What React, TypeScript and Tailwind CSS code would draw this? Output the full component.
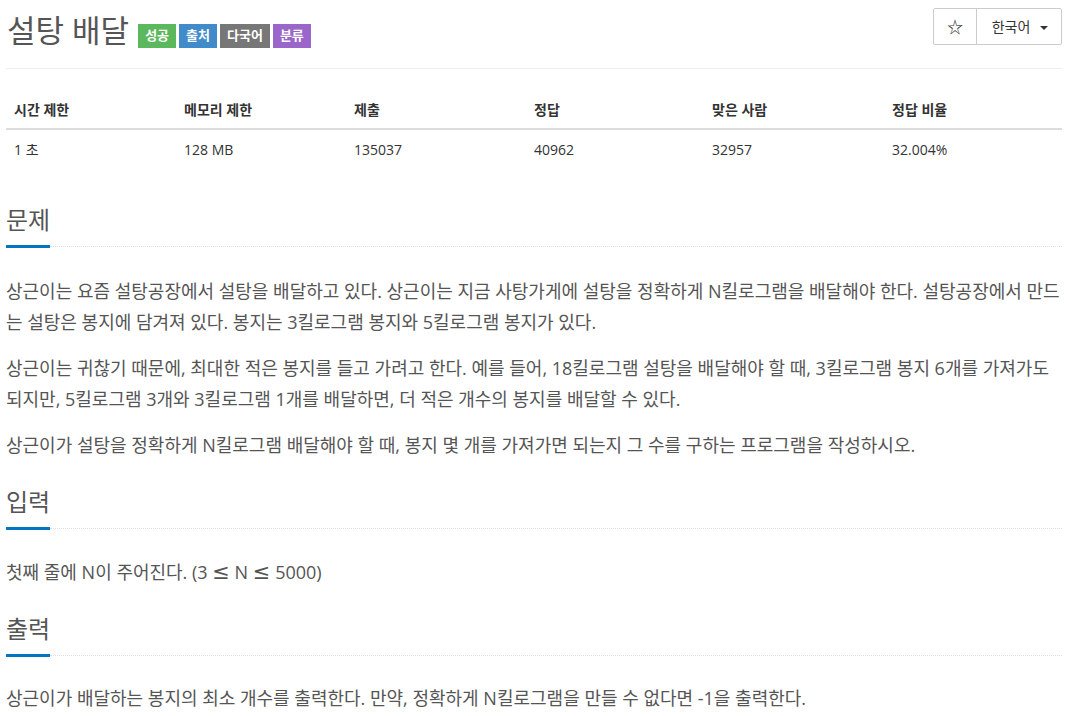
import React from "react";

const FONT = { fontFamily: '"Open Sans", "Noto Sans CJK KR", sans-serif' };
const MATH = { fontFamily: '"DejaVu Sans", sans-serif' };

const badges = [
  { label: "성공", cls: "bg-[#5cb85c]" },
  { label: "출처", cls: "bg-[#428bca]" },
  { label: "다국어", cls: "bg-[#777777]" },
  { label: "분류", cls: "bg-[#9b66c9]" },
];

const stats = [
  ["시간 제한", "1 초"],
  ["메모리 제한", "128 MB"],
  ["제출", "135037"],
  ["정답", "40962"],
  ["맞은 사람", "32957"],
  ["정답 비율", "32.004%"],
];

function SectionTitle({ title }: { title: string }) {
  return (
    <div className="flex items-end">
      <h2 className="border-b-[3px] border-[#0076c0] pb-2 text-[24px] font-normal leading-[34px] text-[#555]">
        {title}
      </h2>
      <div className="mb-[1px] flex-1 border-b border-dotted border-[#dddddd]" />
    </div>
  );
}

export default function App() {
  return (
    <div style={FONT} className="min-h-screen bg-white px-[6px] text-[#555]">
      {/* header */}
      <div className="flex h-[69px] items-start justify-between border-b border-[#eeeeee]">
        <div className="flex items-end pt-[9px]">
          <h1 className="pl-[1px] text-[31px] font-normal leading-[42px] text-[#555]">설탕 배달</h1>
          <div className="mb-[3px] ml-[9px] flex gap-[3px]">
            {badges.map((b) => (
              <span
                key={b.label}
                className={`flex h-[24px] items-center px-[7px] text-[13px] font-bold text-white ${b.cls}`}
              >
                {b.label}
              </span>
            ))}
          </div>
        </div>
        <div className="mt-[8px] flex h-[37px] rounded-[2px] border border-[#cccccc] text-[14px] text-[#333]">
          <button className="flex w-[43px] items-center justify-center border-r border-[#cccccc] text-[16px]">☆</button>
          <button className="flex w-[84px] items-center justify-center gap-[10px] pl-[2px]">
            <span>한국어</span>
            <span className="mt-[2px] h-0 w-0 border-x-[4px] border-t-[4px] border-x-transparent border-t-[#333]" />
          </button>
        </div>
      </div>

      {/* stats table */}
      <div className="mt-[22px] text-[14px] text-[#333]">
        <div className="grid h-[39px] grid-cols-[170px_170px_180px_178px_180px_1fr] items-center border-b-2 border-[#dddddd] font-bold">
          {stats.map(([h]) => (
            <div key={h} className="px-2">{h}</div>
          ))}
        </div>
        <div className="grid h-[38px] grid-cols-[170px_170px_180px_178px_180px_1fr] items-center">
          {stats.map(([h, v]) => (
            <div key={h} className="px-2">{v}</div>
          ))}
        </div>
      </div>

      {/* problem */}
      <div className="mt-[35px]">
        <SectionTitle title="문제" />
        <div className="mt-[28px] flex flex-col gap-[15px] text-[18px] leading-[31px]">
          <p>
            상근이는 요즘 설탕공장에서 설탕을 배달하고 있다. 상근이는 지금 사탕가게에 설탕을 정확하게 N킬로그램을 배달해야 한다. 설탕공장에서 만드는 설탕은 봉지에 담겨져 있다. 봉지는 3킬로그램 봉지와 5킬로그램 봉지가 있다.
          </p>
          <p>
            상근이는 귀찮기 때문에, 최대한 적은 봉지를 들고 가려고 한다. 예를 들어, 18킬로그램 설탕을 배달해야 할 때, 3킬로그램 봉지 6개를 가져가도 되지만, 5킬로그램 3개와 3킬로그램 1개를 배달하면, 더 적은 개수의 봉지를 배달할 수 있다.
          </p>
          <p>상근이가 설탕을 정확하게 N킬로그램 배달해야 할 때, 봉지 몇 개를 가져가면 되는지 그 수를 구하는 프로그램을 작성하시오.</p>
        </div>
      </div>

      {/* input */}
      <div className="mt-[24px]">
        <SectionTitle title="입력" />
        <div className="mt-[27px] text-[18px] leading-[31px]">
          <p>
            첫째 줄에 N이 주어진다. (3 <span style={MATH} className="text-[21px] leading-none">≤</span> N{" "}
            <span style={MATH} className="text-[21px] leading-none">≤</span> 5000)
          </p>
        </div>
      </div>

      {/* output */}
      <div className="mt-[24px]">
        <SectionTitle title="출력" />
        <div className="mt-[26px] text-[18px] leading-[31px]">
          <p>상근이가 배달하는 봉지의 최소 개수를 출력한다. 만약, 정확하게 N킬로그램을 만들 수 없다면 -1을 출력한다.</p>
        </div>
      </div>
    </div>
  );
}
